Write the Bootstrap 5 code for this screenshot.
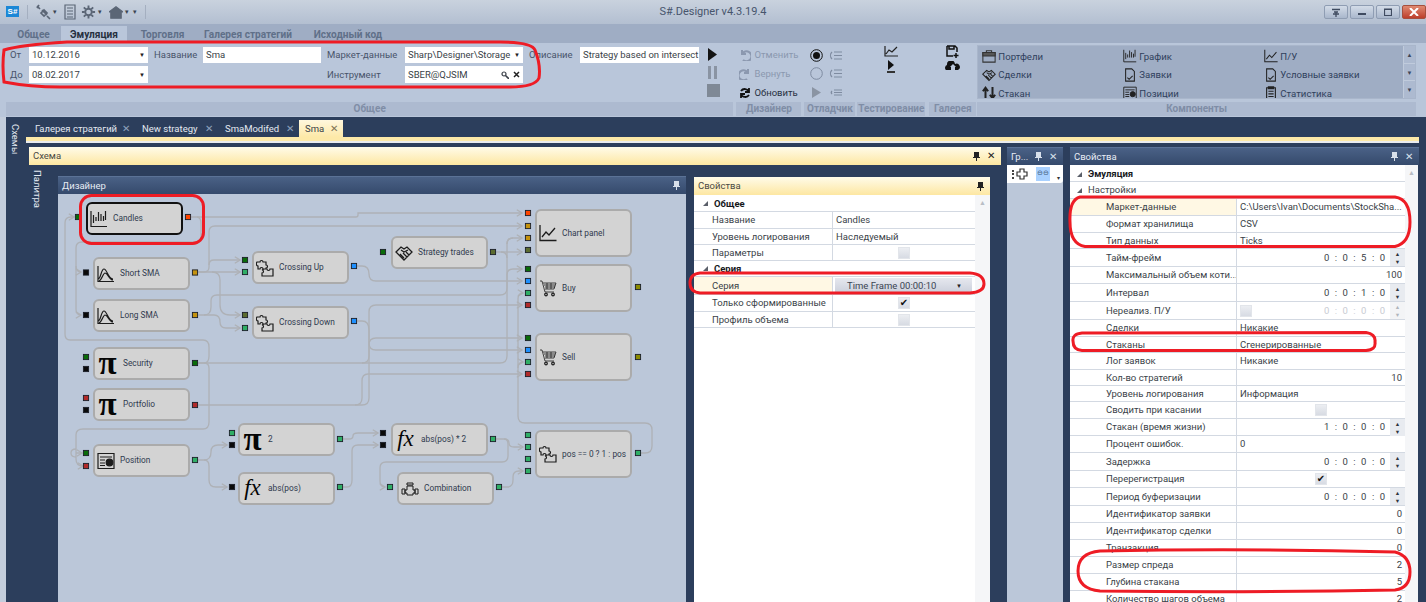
<!DOCTYPE html>
<html lang="ru">
<head>
<meta charset="utf-8">
<title>S#.Designer</title>
<link href="https://cdn.jsdelivr.net/npm/bootstrap@5.3.0/dist/css/bootstrap.min.css" rel="stylesheet">
<style>
html,body{margin:0;height:602px;overflow:hidden}
body{width:1426px;background:#2c3e5c;font-family:Roboto,"Noto Sans","Liberation Sans",sans-serif;font-size:9.5px;line-height:1;color:#3a3f48;position:relative}
.ico{display:block;fill:none;stroke:currentColor;stroke-width:1.2}
.tbar{height:24px;background:linear-gradient(#c9d2de,#b3bfd1)}
.logo-s{width:13px;height:11px;background:#1b87d6;color:#fff;font:700 8px/11px "Liberation Sans",sans-serif;text-align:center;margin:6px 4px 0 6px}
.tb-sep{width:1px;height:14px;background:#a4afc0;margin:5px 4px 0}
.tb-i{color:#5b6676;margin:4px 2px 0 3px}
.tb-car{color:#3b4451;font-size:7px;margin:9px 4px 0 0}
.ttl{font-size:11px;color:#47556c;left:0;right:0;top:6px;text-align:center;position:absolute}
.wbtns{position:absolute;right:0;top:5px;gap:2px}
.wb{width:24px;height:14px;border:1px solid #8f9db3;border-radius:2px;background:linear-gradient(#d3dce8,#a9b7cc);color:#3f4b60;display:flex;align-items:center;justify-content:center}
.wb-x{background:linear-gradient(#e08a72,#bd3f2c);border-color:#a5503f;color:#fff}
.rtabs{height:19px;background:#9fadc4;align-items:flex-end}
.rtab{height:17px;padding-top:4px;font-size:10.1px;font-weight:700;color:#5f7089;text-align:center;white-space:nowrap;flex:none}
.rt1{width:55px;margin-left:6px}
.rt2{width:66px;background:#b9c6da;color:#27303f}
.rt3{width:71px}.rt4{width:100px}.rt5{width:100px}
.rbn{height:74px;background:#b9c6da;padding:0 10px 1px 6px}
.grp{display:flex;flex-direction:column}
.grp-b{height:59px;padding-top:3px}
.grp-l{height:14px;background:#adbad0;color:#7f8da6;font-size:10px;font-weight:700;text-align:center;line-height:13px;white-space:nowrap}
.g-gen{width:728px}
.g-des{width:65px;margin-left:3px}
.g-des .grp-b{padding-top:2px}
.g-dbg{width:51px;margin-left:3px}
.g-tst{width:68px;margin-left:2px}
.g-gal{width:47px;margin-left:4px}
.g-cmp{width:439px;margin-left:1px}
.gen-grid{display:grid;grid-template-columns:23px 119px 55px 118px 84px 118px 57px 119px;grid-template-rows:16px 17px;row-gap:3px;align-items:center;margin-top:1px;height:36px}
.lbl{padding-left:6px;color:#48546a;white-space:nowrap}
.lbl-o{padding-left:4px}
.fld{height:100%;background:#fff;padding:0 3px;color:#3a3f48;white-space:nowrap;overflow:hidden;display:flex;align-items:center;justify-content:space-between}
.car{font-size:6px;color:#222}
.play-col{width:26px;padding-left:8px;gap:5px;padding-top:2px}
.ac-row{height:19px;gap:3px;padding-left:3px;color:#8b98af;white-space:nowrap}
.ac-on{color:#27303f}
.dbg-row{height:18.6px;padding-left:6px;gap:6px}
.tst-col{gap:3px;padding-top:2px}
.gal-box{height:54px;background:#9fadc4;border:1px solid #a9b6cb;margin-top:-1px;position:relative;overflow:hidden}
.gal-sc{width:12px;background:#adbad0;border-left:1px solid #c0cbdc;color:#3d4658;font-size:6px;text-align:center}
.gal-sc div{height:17.6px;line-height:17px;border-bottom:1px solid #c0cbdc}
.gal-col{padding:1px 0 0 4px;width:141px;flex:none}
.gal-it{height:18.6px;gap:2px;color:#2f3f5c;font-size:9.6px;white-space:nowrap}
.gal-it svg{color:#222}
.dock{height:485px}
.lstrip{width:6px;background:#c3cddc}
.vbar{width:19px;background:#2c3e5c;color:#e5ebf3;padding:7px 0 0 4px}
.vt{writing-mode:vertical-rl;font-size:9.5px}
.dmain{width:1401px}
.dtabs{height:20px;padding:3px 0 0 1px;position:relative}
.dtab{height:17px;padding:0 3px 0 9px;color:#e4e9f1;white-space:nowrap;justify-content:space-between}
.dtab span{color:#8ea0bb;font-size:10px;line-height:1}
.dt-a{width:107px}.dt-b{width:83px}.dt-c{width:81px}
.dtab-on{width:44px;background:linear-gradient(#fff7de,#fde9a8);color:#3a3f48;padding:0 5px 0 6px;margin-left:2px}
.dtab-on span{color:#7d7355}
.ystrip{height:7px;margin:0 7px 0 1px;border-top:4px solid #fde9a8;box-shadow:inset 0 2px 0 #e9ecf0}
.panels{padding:3px 0 0 4px;gap:6px;height:458px}
.ph{height:18px;padding:0 4px;display:flex;align-items:center;justify-content:space-between;flex:none;gap:2px;white-space:nowrap}
.ph-d{background:linear-gradient(#4a6186,#354a6c);color:#e8edf5;border-top:1px solid #5b7296}
.ph-y{background:linear-gradient(#fffbe9,#fde7a2);color:#4a4a44}
.ph-ic{color:#222;font-size:10px;display:flex;align-items:center;gap:7px;padding-right:2px}
.ph-d .ph-ic{color:#d8e0eb}
.pin{width:7px;height:9px;display:block;fill:currentColor}
.p-sch{width:972px}
.sch-b{height:440px;padding-top:11px}
.pal{width:29px;color:#e5ebf3;padding:5px 0 0 3px;margin-top:-11px}
.p-des{width:628px;position:relative}
.canvas{position:relative;height:408px;background:#bbc7d9;overflow:hidden}
.canvas>svg{position:absolute;left:0;top:0}
.nd{position:absolute;background:#d3d3d3;border:2px solid #ababab;border-radius:6px;display:flex;align-items:center;color:#2f3a4e;font-size:8.3px;width:97px;white-space:nowrap}
.nd svg{flex:none;margin:0 5px 0 2px;color:#1c1c1c}
.nd-on{border-color:#111}
.nd-g{font:700 33px/1 "Liberation Serif",serif;width:21px;margin:-7px 5px 0 2px;text-align:center;color:#050505;flex:none;height:26px}
.nd-f{font:italic 400 23px/1 "Liberation Serif",serif;width:21px;margin:-2px 5px 0 2px;text-align:center;color:#050505;flex:none}
.h33{height:33px}.h48{height:48px}
.a1{left:28px;top:8px}.a2{left:35px;top:63px}.a3{left:35px;top:105px}.a4{left:194px;top:57px}.a5{left:194px;top:112px}
.a6{left:35px;top:153px}.a7{left:35px;top:194px}.a8{left:35px;top:250px}.a9{left:180px;top:229px}.a10{left:180px;top:278px}
.a11{left:333px;top:42px}.a12{left:477px;top:15px}.a13{left:477px;top:70px}.a14{left:477px;top:139px}
.a15{left:333px;top:229px}.a16{left:339px;top:278px}.a17{left:477px;top:236px}
.wires{fill:none;stroke:#aeb1b6;stroke-width:1.3}
.p-k{fill:#0a0a0a}.p-dg{fill:#0a6b0a}.p-sg{fill:#2fae66}.p-bl{fill:#1e90ff}.p-go{fill:#c4920e}.p-or{fill:#ff4500}.p-br{fill:#b02a2a}.p-ol{fill:#5b6b2f}.p-yo{fill:#8a8a00}
.ports rect{stroke:#1a1f28;stroke-width:.9;width:5.2px;height:5.2px}
.p-prop{width:296px;margin-left:8px;margin-top:1px}
.prop-b{height:407px;background:#fff;display:flex}
.pg{--nw:139px;--pl:18px;width:281px;flex:none;padding-top:1px}
.pg-r{--nw:167px;--pl:36px;width:335px;padding-top:2px}
.pgr{display:flex;align-items:center;border-bottom:1px solid #d3d9e2;box-sizing:border-box;color:#3a3f48}
.pg-n{width:var(--nw);padding-left:var(--pl);flex:none;border-right:1px solid #d3d9e2;height:100%;display:flex;align-items:center;white-space:nowrap;overflow:hidden}
.pg-v{flex:1;padding:0 3px;height:100%;display:flex;align-items:center;white-space:nowrap;min-width:0}
.pg-e{justify-content:flex-end}
.pg-c{justify-content:center}
.pgs{font-weight:700;color:#16181c;padding-left:9px;gap:6px;display:flex;align-items:center;height:100%;white-space:nowrap;width:var(--nw);flex:none}
.pg-r .pgs{padding-left:7px}
.pgs-n{font-weight:400;color:#3a3f48}
.tri{width:0;height:0;border-style:solid;border-width:0 0 5px 5px;border-color:transparent transparent #5a5f69 transparent}
.cb{width:12px;height:12px;background:linear-gradient(#eceef2,#d7dbe3);border:1px solid #e2e5ea;color:#111;font:700 10px/10px "DejaVu Sans",sans-serif;text-align:center;display:block}
.hi{background:#fff8e4}
.cbo{height:15px;width:138px;margin-left:-1px;background:linear-gradient(#e6e8ef,#cbcfdb);display:flex;align-items:center;justify-content:space-between;padding:0 10px 0 12px;color:#3b4452}
.sc{flex:1;background:#f5f6f8;text-align:center;color:#b9bdc5;font-size:7px;padding-top:5px}
.r15{height:15px}.r16{height:16px}.r17{height:17px}.r18{height:18px}
.spin{width:15px;height:17px;flex:none;background:#e8ebf0;color:#30353d;font-size:5.5px;line-height:8px;text-align:center;margin-left:5px;margin-right:-3px;padding-top:1px}
.tm{word-spacing:3.1px}
.dis{color:#c9ccd3}
.spin.dis{color:#b0b4bc;background:#f3f4f6}
.p-gr{width:56px}
.gr-b{height:440px;background:#bbc7d9}
.gr-t{height:18px;background:#fff;border-radius:0 0 3px 0;width:56px;padding-left:5px;gap:2px}
.gr-on{width:14px;height:14px;background:#a9d1ff;color:#46617e;font-size:7px;text-align:center;line-height:13px;margin-left:6px;white-space:nowrap}
.gr-m{font-size:6px;color:#333;margin:7px 0 0 5px}
.gr-d{width:2px;height:9px;border-left:2px dotted #444}
.p-r{width:349px;margin-left:1px}
.r-b{height:440px;background:#fff;display:flex;width:348px}
.anno{position:absolute;left:0;top:0;z-index:5;pointer-events:none;fill:none;stroke:#ee1c25;stroke-width:3}
</style>
</head>
<body>
<svg width="0" height="0" class="position-absolute">
<defs>
<symbol id="s-candle" viewBox="0 0 18 18"><path d="M1 1V16.500H17M3.500 5v8M6 7v4M8.500 2v9M11 4v7M13.500 6v5M15.500 1v9"/></symbol>
<symbol id="s-line" viewBox="0 0 18 18"><path d="M1 1V16.500H17.500M3 13l4-5 3 3 6-7" stroke-width="1.300"/></symbol>
<symbol id="s-sma" viewBox="0 0 18 18"><path d="M1 1V16.500H17M1 14C4 14 4 4 7 4c3 0 4 10 9 10M2 16C5 15 6 8 8 8c3 0 4 7 8 7"/></symbol>
<symbol id="s-puz" viewBox="0 0 18 18"><path d="M1 3h3c0-2 3-2 3 0h3v3c2 0 2 3 0 3v1H7c0-2-3-2-3 0H2V7C0 7 0 4 1 3zM8 10h3c0 2 3 2 3 0h3v7H6v-3c2 0 2-3 0-3z"/></symbol>
<symbol id="s-shake" viewBox="0 0 18 18"><path d="M1 8l5-5 3 2 3-2 5 5-8 8zM6 6l3 2 4-2M5 10l4 4M8 9l4 4M11 8l3 3" stroke-width="1.300"/></symbol>
<symbol id="s-cart" viewBox="0 0 18 18"><path d="M1 2h2l3 11h9M4 4h13l-2 6H6M5 6h11M6 8h10M8 4v6M12 4v6" stroke-width=".8"/><circle cx="7" cy="15.500" r="1.300"/><circle cx="14" cy="15.500" r="1.300"/></symbol>
<symbol id="s-pos" viewBox="0 0 18 18"><path d="M1 1.500h16v15H1zM3 5h12M3 8h5M3 11h5M3 13.500h5"/><circle cx="12.500" cy="10.500" r="3.300" fill="currentColor"/></symbol>
<symbol id="s-valve" viewBox="0 0 18 18"><path d="M1 9h3v5H1zM14 9h3v5h-3zM4 10h2V6h6v4h2v3h-2v2H6v-2H4zM6 3h6v2H6z" stroke-width="1"/></symbol>
<symbol id="s-case" viewBox="0 0 16 16"><path d="M1 4h14v11H1zM5 4V2h6v2" stroke="#333"/><path d="M1 4h14v4H1z" fill="#555" stroke="#333"/></symbol>
<symbol id="s-doc" viewBox="0 0 16 16"><path d="M3 1h7l3 3v11H3zM5 11l2 2 4-4"/></symbol>
<symbol id="s-arr" viewBox="0 0 16 16"><path d="M4 15V3M1 6l3-4 3 4M12 1v12M9 10l3 4 3-4" stroke-width="2.300"/></symbol>
<symbol id="s-clip" viewBox="0 0 16 16"><path d="M3 2h10v13H3zM5 1h6v2H5zM5 6h6M5 9h6M5 12h6" stroke-width="1.300"/></symbol>
</defs>
</svg>

<div class="tbar d-flex position-relative">
  <div class="logo-s">S#</div>
  <div class="tb-sep"></div>
  <svg class="ico tb-i" width="16" height="16" viewBox="0 0 16 16"><path d="M2 2l3 3M4 1L2 4M7 6l5 5M6 9l3-3 3 3-3 3zM12 12l3 3" stroke-width="1.700"/></svg><span class="tb-car">▾</span>
  <svg class="ico tb-i" width="12" height="16" viewBox="0 0 12 16"><path d="M1 1h10v14H1zM3 4h6M3 7h6M3 10h6M3 13h6"/></svg>
  <svg class="ico tb-i" width="15" height="16" viewBox="0 0 16 16"><circle cx="8" cy="8" r="3.500" stroke-width="2"/><path d="M8 1v3M8 12v3M1 8h3M12 8h3M3 3l2 2M11 11l2 2M13 3l-2 2M5 11l-2 2" stroke-width="2"/></svg><span class="tb-car">▾</span>
  <svg class="ico tb-i" width="14" height="16" viewBox="0 0 16 16"><path d="M0 8l8-6 8 6h-2v7H2V8z" fill="currentColor"/></svg><span class="tb-car">▾</span>
  <span class="tb-car">▾</span>
  <div class="tb-sep"></div>
  <div class="ttl">S#.Designer v4.3.19.4</div>
  <div class="wbtns d-flex">
    <div class="wb"><svg class="ico" width="10" height="9" viewBox="0 0 10 9"><path d="M1 1.500h8M3 4h4M5 4v5M2 6h6" stroke-width="1.300"/></svg></div>
    <div class="wb"><svg class="ico" width="8" height="6" viewBox="0 0 8 6"><path d="M0 5h8" stroke-width="2"/></svg></div>
    <div class="wb"><svg class="ico" width="8" height="8" viewBox="0 0 8 8"><path d="M.5 1h7v6.500H.500z M.5 1.500h7" stroke-width="1.200"/></svg></div>
    <div class="wb wb-x"><svg class="ico" width="10" height="8" viewBox="0 0 10 8"><path d="M1 0l8 8M9 0L1 8" stroke-width="2"/></svg></div>
  </div>
</div>

<div class="rtabs d-flex">
  <div class="rtab rt1">Общее</div>
  <div class="rtab rt2">Эмуляция</div>
  <div class="rtab rt3">Торговля</div>
  <div class="rtab rt4">Галерея стратегий</div>
  <div class="rtab rt5">Исходный код</div>
</div>

<div class="rbn d-flex">
  <div class="grp g-gen">
    <div class="grp-b d-flex">
      <div class="gen-grid">
        <div class="lbl lbl-o">От</div><div class="fld">10.12.2016<span class="car">▼</span></div>
        <div class="lbl">Название</div><div class="fld">Sma</div>
        <div class="lbl">Маркет-данные</div><div class="fld">Sharp\Designer\Storage<span class="car">▼</span></div>
        <div class="lbl">Описание</div><div class="fld">Strategy based on intersect</div>
        <div class="lbl lbl-o">До</div><div class="fld">08.02.2017<span class="car">▼</span></div>
        <div></div><div></div>
        <div class="lbl">Инструмент</div><div class="fld">SBER@QJSIM<span class="d-flex gap-1 align-items-center"><svg class="ico" width="8" height="8" viewBox="0 0 8 8"><circle cx="3" cy="3" r="2"/><path d="M4.500 4.500L8 8" stroke-width="1.600"/></svg><svg class="ico" width="7" height="7" viewBox="0 0 7 7"><path d="M1 1l5 5M6 1L1 6" stroke-width="1.500" stroke="#222"/></svg></span></div>
      </div>
      <div class="play-col d-flex flex-column">
        <svg width="11" height="13" viewBox="0 0 11 13"><path d="M1 0l9 6.500L1 13z" fill="#141414"/></svg>
        <svg width="11" height="13" viewBox="0 0 11 13"><path d="M1 0h3v13H1zM7 0h3v13H7z" fill="#8a94a3"/></svg>
        <svg width="13" height="13" viewBox="0 0 13 13"><path d="M0 0h13v13H0z" fill="#7f8996"/></svg>
      </div>
    </div>
    <div class="grp-l">Общее</div>
  </div>
  <div class="grp g-des">
    <div class="grp-b">
      <div class="ac-row d-flex align-items-center"><svg class="ico" width="12" height="12" viewBox="0 0 12 12"><path d="M3 1v4h4M3 5a5 5 0 1 1 1 6" stroke-width="2"/></svg>Отменить</div>
      <div class="ac-row d-flex align-items-center"><svg class="ico" width="12" height="12" viewBox="0 0 12 12"><path d="M9 1v4H5M9 5a5 5 0 1 0-1 6" stroke-width="2"/></svg>Вернуть</div>
      <div class="ac-row ac-on d-flex align-items-center"><svg class="ico" width="12" height="12" viewBox="0 0 12 12"><path d="M10 5A4.500 4.500 0 0 0 2 4M2 7a4.500 4.500 0 0 0 8 1M10 1v4H6M2 11V7h4" stroke="#111" stroke-width="1.800"/></svg>Обновить</div>
    </div>
    <div class="grp-l">Дизайнер</div>
  </div>
  <div class="grp g-dbg">
    <div class="grp-b">
      <div class="dbg-row d-flex align-items-center"><svg width="13" height="13" viewBox="0 0 13 13"><circle cx="6.500" cy="6.500" r="5.800" fill="none" stroke="#111"/><circle cx="6.500" cy="6.500" r="3.500" fill="#111"/></svg><svg class="ico" width="13" height="9" viewBox="0 0 13 9" color="#7e8ba0"><path d="M3 1C1 3 1 6 3 8M5 1h8M5 4.500h8M5 8h8"/></svg></div>
      <div class="dbg-row d-flex align-items-center"><svg width="13" height="13" viewBox="0 0 13 13"><circle cx="6.500" cy="6.500" r="5.800" fill="none" stroke="#7e8ba0"/></svg><svg class="ico" width="13" height="9" viewBox="0 0 13 9" color="#7e8ba0"><path d="M3 1C1 3 1 6 3 8M5 1h8M5 4.500h8M5 8h8"/></svg></div>
      <div class="dbg-row d-flex align-items-center"><svg width="13" height="13" viewBox="0 0 13 13"><path d="M2 1l9 5.500L2 12z" fill="#8a94a3"/></svg><svg class="ico" width="13" height="9" viewBox="0 0 13 9" color="#7e8ba0"><path d="M3 3C2 4 2 5 3 6M5 2h8M5 4.500h8M5 7h8"/></svg></div>
    </div>
    <div class="grp-l">Отладчик</div>
  </div>
  <div class="grp g-tst">
    <div class="grp-b tst-col d-flex flex-column align-items-center">
      <svg class="ico" width="14" height="12" viewBox="0 0 14 12" color="#222"><path d="M1 1v10h13M2 9l3-4 3 2 5-5"/></svg>
      <svg width="10" height="14" viewBox="0 0 10 14"><path d="M2 0l6 5-6 5z" fill="#111"/><path d="M1 12h8" stroke="#333" stroke-width="2"/></svg>
    </div>
    <div class="grp-l">Тестирование</div>
  </div>
  <div class="grp g-gal">
    <div class="grp-b tst-col d-flex flex-column align-items-center">
      <svg class="ico" width="13" height="13" viewBox="0 0 13 13" color="#111"><path d="M1 1h8l2 2v4M1 1v10h6M3 1v3h5V1" stroke-width="1.500"/><path d="M10 8v5M7.500 10.500h5" stroke-width="1.500"/></svg>
      <svg width="15" height="10" viewBox="0 0 15 10"><path d="M1 9a3 3 0 0 1 1-5 4 4 0 0 1 8-1 3 3 0 0 1 3 6h-3V6h1L8 3 5 6h1v3z" fill="#111"/></svg>
    </div>
    <div class="grp-l">Галерея</div>
  </div>
  <div class="grp g-cmp">
    <div class="grp-b">
      <div class="gal-box d-flex">
        <div class="gal-col">
          <div class="gal-it d-flex align-items-center"><svg class="ico" width="14" height="14"><use href="#s-case"/></svg>Портфели</div>
          <div class="gal-it d-flex align-items-center"><svg class="ico" width="14" height="14"><use href="#s-shake"/></svg>Сделки</div>
          <div class="gal-it d-flex align-items-center"><svg class="ico" width="14" height="14"><use href="#s-arr"/></svg>Стакан</div>
        </div>
        <div class="gal-col">
          <div class="gal-it d-flex align-items-center"><svg class="ico" width="14" height="14"><use href="#s-candle"/></svg>График</div>
          <div class="gal-it d-flex align-items-center"><svg class="ico" width="14" height="14"><use href="#s-doc"/></svg>Заявки</div>
          <div class="gal-it d-flex align-items-center"><svg class="ico" width="14" height="14"><use href="#s-pos"/></svg>Позиции</div>
        </div>
        <div class="gal-col">
          <div class="gal-it d-flex align-items-center"><svg class="ico" width="14" height="14"><use href="#s-line"/></svg>П/У</div>
          <div class="gal-it d-flex align-items-center"><svg class="ico" width="14" height="14"><use href="#s-doc"/></svg>Условные заявки</div>
          <div class="gal-it d-flex align-items-center"><svg class="ico" width="14" height="14"><use href="#s-clip"/></svg>Статистика</div>
        </div>
        <div class="gal-sc ms-auto"><div>▲</div><div>▼</div><div>▼</div></div>
      </div>
    </div>
    <div class="grp-l">Компоненты</div>
  </div>
</div>

<div class="dock d-flex">
  <div class="lstrip"></div>
  <div class="vbar"><div class="vt">Схемы</div></div>
  <div class="dmain">
    <div class="dtabs d-flex">
      <div class="dtab dt-a d-flex align-items-center">Галерея стратегий<span>✕</span></div>
      <div class="dtab dt-b d-flex align-items-center">New strategy<span>✕</span></div>
      <div class="dtab dt-c d-flex align-items-center">SmaModifed<span>✕</span></div>
      <div class="dtab dtab-on d-flex align-items-center">Sma<span>✕</span></div>
    </div>
    <div class="ystrip"></div>
    <div class="panels d-flex">
      <div class="p-sch">
        <div class="ph ph-y">Схема<div class="ph-ic"><svg class="pin" viewBox="0 0 7 9"><path d="M1 0h5v5h1v1H4v3H3V6H0V5h1z"/></svg>✕</div></div>
        <div class="sch-b d-flex">
          <div class="pal"><div class="vt">Палитра</div></div>
          <div class="p-des">
            <div class="ph ph-d">Дизайнер<div class="ph-ic"><svg class="pin" viewBox="0 0 7 9"><path d="M1 0h5v5h1v1H4v3H3V6H0V5h1z"/></svg></div></div>
            <div class="canvas">
              <svg width="628" height="408" viewBox="58 194 628 408">
                <defs><marker id="ar" markerWidth="6" markerHeight="6" refX="5" refY="3" orient="auto"><path d="M1 .5L5 3 1 5.500" fill="none" stroke="#aeb1b6"/></marker></defs>
                <g class="wires">
                  <path d="M191 217H356Q358 217 358 215V213H522" marker-end="url(#ar)"/>
                  <path d="M197 217Q201 217 201 224V236Q201 242 195 242H82Q76 242 76 248V266Q76 272 81 272" marker-end="url(#ar)"/>
                  <path d="M76 266V309Q76 315 81 315" marker-end="url(#ar)"/>
                  <path d="M198 272H204Q209 272 209 267V232Q209 226 215 226H522" marker-end="url(#ar)"/>
                  <path d="M209 265Q209 260 214 260H240" marker-end="url(#ar)"/>
                  <path d="M198 272H240" marker-end="url(#ar)"/>
                  <path d="M212 272Q220 272 220 280V305Q220 315 230 315H240" marker-end="url(#ar)"/>
                  <path d="M198 315H204Q211 315 211 307V301Q211 295 217 295H500Q507 295 507 288V244Q507 238 513 238H522" marker-end="url(#ar)"/>
                  <path d="M204 315H214Q220 315 220 322Q220 328 226 328H240" marker-end="url(#ar)"/>
                  <path d="M357 266H362Q369 266 369 274Q369 281 376 281H522" marker-end="url(#ar)"/>
                  <path d="M357 321H362Q369 321 369 330V343Q369 350 376 350H522" marker-end="url(#ar)"/>
                  <path d="M496 252H522" marker-end="url(#ar)"/>
                  <path d="M501 252Q507 252 507 258M507 244Q507 238 513 238"/>
                  <path d="M198 363H500Q507 363 507 356V275Q507 269 513 269H522" marker-end="url(#ar)"/>
                  <path d="M362 363Q369 363 369 356V345Q369 338 376 338H522" marker-end="url(#ar)"/>
                  <path d="M198 405H362Q369 405 369 398V312Q369 305 376 305H522" marker-end="url(#ar)"/>
                  <path d="M355 405Q362 405 362 398V381Q362 374 368 374H522" marker-end="url(#ar)"/>
                  <path d="M198 363H204Q209 363 209 356V347Q209 340 203 340H70Q65 340 65 334V223Q65 217 71 217H74" marker-end="url(#ar)"/>
                  <path d="M204 363Q209 363 209 368V422Q209 429 203 429H83Q76 429 76 435V459Q76 466 83 466" marker-end="url(#ar)"/>
                  <path d="M76 449Q71 449 71 453T76 457M76 453H82" marker-end="url(#ar)"/>
                  <path d="M198 460H204Q211 460 211 452Q211 445 218 445H227" marker-end="url(#ar)"/>
                  <path d="M204 460Q209 460 209 466V480Q209 487 216 487H227" marker-end="url(#ar)"/>
                  <path d="M343 439H349Q353 439 353 436Q353 433 358 433H378" marker-end="url(#ar)"/>
                  <path d="M343 487H347Q352 487 352 480V451Q352 445 358 445H378" marker-end="url(#ar)"/>
                  <path d="M496 439H504Q509 439 509 443Q509 447 514 447H523" marker-end="url(#ar)"/>
                  <path d="M504 439Q508 439 508 444V456Q508 462 502 462H386Q380 462 380 468V481Q380 487 385 487" marker-end="url(#ar)"/>
                  <path d="M502 487H507Q513 487 513 480V477Q513 471 519 471H523" marker-end="url(#ar)"/>
                  <path d="M641 453H645Q652 453 652 446V430Q652 423 645 423H525Q518 423 518 416V299Q518 293 523 293" marker-end="url(#ar)"/>
                  <path d="M518 368Q518 362 523 362" marker-end="url(#ar)"/>
                </g>
                <g class="ports">
                  <rect x="75.400" y="214.400" class="p-dg"/><rect x="185.400" y="214.400" class="p-or"/>
                  <rect x="83.400" y="269.900" class="p-k"/><rect x="192.400" y="269.900" class="p-go"/>
                  <rect x="83.400" y="312.400" class="p-k"/><rect x="192.400" y="312.400" class="p-go"/>
                  <rect x="242.400" y="257.400" class="p-dg"/><rect x="242.400" y="269.400" class="p-sg"/><rect x="351.400" y="263.400" class="p-bl"/>
                  <rect x="242.400" y="312.400" class="p-ol"/><rect x="242.400" y="325.400" class="p-sg"/><rect x="351.400" y="318.400" class="p-bl"/>
                  <rect x="83.400" y="354.400" class="p-dg"/><rect x="83.400" y="366.400" class="p-k"/><rect x="192.400" y="360.400" class="p-dg"/>
                  <rect x="83.400" y="395.400" class="p-br"/><rect x="83.400" y="407.400" class="p-k"/><rect x="192.400" y="402.400" class="p-br"/>
                  <rect x="83.400" y="450.400" class="p-dg"/><rect x="83.400" y="463.400" class="p-br"/><rect x="192.400" y="457.400" class="p-sg"/>
                  <rect x="229.400" y="430.400" class="p-sg"/><rect x="229.400" y="442.400" class="p-k"/><rect x="337.400" y="436.400" class="p-sg"/>
                  <rect x="229.400" y="484.400" class="p-k"/><rect x="337.400" y="484.400" class="p-sg"/>
                  <rect x="380.400" y="430.400" class="p-k"/><rect x="380.400" y="442.400" class="p-k"/><rect x="490.400" y="436.400" class="p-sg"/>
                  <rect x="387.400" y="484.400" class="p-sg"/><rect x="496.400" y="484.400" class="p-sg"/>
                  <rect x="525.400" y="432.400" class="p-sg"/><rect x="525.400" y="444.400" class="p-sg"/><rect x="525.400" y="456.400" class="p-sg"/><rect x="525.400" y="468.400" class="p-sg"/><rect x="635.400" y="450.400" class="p-sg"/>
                  <rect x="525.400" y="210.400" class="p-or"/><rect x="525.400" y="223.400" class="p-go"/><rect x="525.400" y="235.400" class="p-go"/><rect x="525.400" y="247.400" class="p-ol"/>
                  <rect x="380.400" y="249.400" class="p-dg"/><rect x="490.400" y="249.400" class="p-ol"/>
                  <rect x="525.400" y="266.400" class="p-dg"/><rect x="525.400" y="278.400" class="p-bl"/><rect x="525.400" y="290.400" class="p-sg"/><rect x="525.400" y="302.400" class="p-br"/><rect x="635.400" y="284.400" class="p-yo"/>
                  <rect x="525.400" y="335.400" class="p-dg"/><rect x="525.400" y="347.400" class="p-bl"/><rect x="525.400" y="359.400" class="p-sg"/><rect x="525.400" y="371.400" class="p-br"/><rect x="635.400" y="354.400" class="p-yo"/>
                </g>
              </svg>
              <div class="nd nd-on h33 a1"><svg class="ico" width="18" height="18"><use href="#s-candle"/></svg>Candles</div>
              <div class="nd h33 a2"><svg class="ico" width="18" height="18"><use href="#s-sma"/></svg>Short SMA</div>
              <div class="nd h33 a3"><svg class="ico" width="18" height="18"><use href="#s-sma"/></svg>Long SMA</div>
              <div class="nd h33 a4"><svg class="ico" width="18" height="18"><use href="#s-puz"/></svg>Crossing Up</div>
              <div class="nd h33 a5"><svg class="ico" width="18" height="18"><use href="#s-puz"/></svg>Crossing Down</div>
              <div class="nd h33 a6"><span class="nd-g">π</span>Security</div>
              <div class="nd h33 a7"><span class="nd-g">π</span>Portfolio</div>
              <div class="nd h33 a8"><svg class="ico" width="18" height="18"><use href="#s-pos"/></svg>Position</div>
              <div class="nd h33 a9"><span class="nd-g">π</span>2</div>
              <div class="nd h33 a10"><span class="nd-f">fx</span>abs(pos)</div>
              <div class="nd h33 a11"><svg class="ico" width="18" height="18"><use href="#s-shake"/></svg>Strategy trades</div>
              <div class="nd h48 a12"><svg class="ico" width="18" height="18"><use href="#s-line"/></svg>Chart panel</div>
              <div class="nd h48 a13"><svg class="ico" width="18" height="18"><use href="#s-cart"/></svg>Buy</div>
              <div class="nd h48 a14"><svg class="ico" width="18" height="18"><use href="#s-cart"/></svg>Sell</div>
              <div class="nd h33 a15"><span class="nd-f">fx</span>abs(pos) * 2</div>
              <div class="nd h33 a16"><svg class="ico" width="18" height="18"><use href="#s-valve"/></svg>Combination</div>
              <div class="nd h48 a17"><svg class="ico" width="18" height="18"><use href="#s-puz"/></svg>pos == 0 ? 1 : pos</div>
            </div>
          </div>
          <div class="p-prop">
            <div class="ph ph-y">Свойства<div class="ph-ic"><svg class="pin" viewBox="0 0 7 9"><path d="M1 0h5v5h1v1H4v3H3V6H0V5h1z"/></svg></div></div>
            <div class="prop-b">
              <div class="pg">
                <div class="pgr r16"><div class="pgs"><i class="tri"></i>Общее</div></div>
                <div class="pgr r17"><div class="pg-n">Название</div><div class="pg-v">Candles</div></div>
                <div class="pgr r16"><div class="pg-n">Уровень логирования</div><div class="pg-v">Наследуемый</div></div>
                <div class="pgr r16"><div class="pg-n">Параметры</div><div class="pg-v pg-c"><i class="cb"></i></div></div>
                <div class="pgr r16"><div class="pgs"><i class="tri"></i>Серия</div></div>
                <div class="pgr r18"><div class="pg-n hi">Серия</div><div class="pg-v"><div class="cbo">Time Frame 00:00:10<span class="car">▼</span></div></div></div>
                <div class="pgr r17"><div class="pg-n">Только сформированные</div><div class="pg-v pg-c"><i class="cb">✔</i></div></div>
                <div class="pgr r16"><div class="pg-n">Профиль объема</div><div class="pg-v pg-c"><i class="cb"></i></div></div>
              </div>
              <div class="sc">▲</div>
            </div>
          </div>
        </div>
      </div>
      <div class="p-gr">
        <div class="ph ph-d">Гр...<div class="ph-ic"><svg class="pin" viewBox="0 0 7 9"><path d="M1 0h5v5h1v1H4v3H3V6H0V5h1z"/></svg>✕</div></div>
        <div class="gr-b">
          <div class="gr-t d-flex align-items-center"><i class="gr-d"></i><svg class="ico" width="12" height="12" viewBox="0 0 12 12" color="#333"><path d="M4 1h4v3h3v4H8v3H4V8H1V4h3z"/></svg><div class="gr-on">⊖⊖</div><span class="gr-m">▾</span></div>
        </div>
      </div>
      <div class="p-r">
        <div class="ph ph-d">Свойства<div class="ph-ic"><svg class="pin" viewBox="0 0 7 9"><path d="M1 0h5v5h1v1H4v3H3V6H0V5h1z"/></svg>✕</div></div>
        <div class="r-b">
          <div class="pg pg-r">
            <div class="pgr r15"><div class="pgs"><i class="tri"></i>Эмуляция</div></div>
            <div class="pgr r17"><div class="pgs pgs-n"><i class="tri"></i>Настройки</div></div>
            <div class="pgr r17"><div class="pg-n hi">Маркет-данные</div><div class="pg-v">C:\Users\Ivan\Documents\StockSha...</div></div>
            <div class="pgr r17"><div class="pg-n">Формат хранилища</div><div class="pg-v">CSV</div></div>
            <div class="pgr r16"><div class="pg-n">Тип данных</div><div class="pg-v">Ticks</div></div>
            <div class="pgr r18"><div class="pg-n">Тайм-фрейм</div><div class="pg-v pg-e"><span class="tm">0 : 0 : 5 : 0</span><div class="spin">▲<br>▼</div></div></div>
            <div class="pgr r17"><div class="pg-n">Максимальный объем коти...</div><div class="pg-v pg-e">100</div></div>
            <div class="pgr r18"><div class="pg-n">Интервал</div><div class="pg-v pg-e"><span class="tm">0 : 0 : 1 : 0</span><div class="spin">▲<br>▼</div></div></div>
            <div class="pgr r18"><div class="pg-n">Нереализ. П/У</div><div class="pg-v pg-e"><i class="cb me-auto"></i><span class="tm dis">0 : 0 : 0 : 0</span><div class="spin dis">▲<br>▼</div></div></div>
            <div class="pgr r17"><div class="pg-n">Сделки</div><div class="pg-v">Никакие</div></div>
            <div class="pgr r16"><div class="pg-n">Стаканы</div><div class="pg-v">Сгенерированные</div></div>
            <div class="pgr r17"><div class="pg-n">Лог заявок</div><div class="pg-v">Никакие</div></div>
            <div class="pgr r16"><div class="pg-n">Кол-во стратегий</div><div class="pg-v pg-e">10</div></div>
            <div class="pgr r16"><div class="pg-n">Уровень логирования</div><div class="pg-v">Информация</div></div>
            <div class="pgr r17"><div class="pg-n">Сводить при касании</div><div class="pg-v pg-c"><i class="cb"></i></div></div>
            <div class="pgr r17"><div class="pg-n">Стакан (время жизни)</div><div class="pg-v pg-e"><span class="tm">1 : 0 : 0 : 0</span><div class="spin">▲<br>▼</div></div></div>
            <div class="pgr r17"><div class="pg-n">Процент ошибок.</div><div class="pg-v">0</div></div>
            <div class="pgr r18"><div class="pg-n">Задержка</div><div class="pg-v pg-e"><span class="tm">0 : 0 : 0 : 0</span><div class="spin">▲<br>▼</div></div></div>
            <div class="pgr r17"><div class="pg-n">Перерегистрация</div><div class="pg-v pg-c"><i class="cb">✔</i></div></div>
            <div class="pgr r18"><div class="pg-n">Период буферизации</div><div class="pg-v pg-e"><span class="tm">0 : 0 : 0 : 0</span><div class="spin">▲<br>▼</div></div></div>
            <div class="pgr r17"><div class="pg-n">Идентификатор заявки</div><div class="pg-v pg-e">0</div></div>
            <div class="pgr r17"><div class="pg-n">Идентификатор сделки</div><div class="pg-v pg-e">0</div></div>
            <div class="pgr r17"><div class="pg-n">Транзакция</div><div class="pg-v pg-e">0</div></div>
            <div class="pgr r17"><div class="pg-n">Размер спреда</div><div class="pg-v pg-e">2</div></div>
            <div class="pgr r17"><div class="pg-n">Глубина стакана</div><div class="pg-v pg-e">5</div></div>
            <div class="pgr r17"><div class="pg-n">Количество шагов объема</div><div class="pg-v pg-e">2</div></div>
          </div>
          <div class="sc">▲</div>
        </div>
      </div>
    </div>
  </div>
</div>

<svg class="anno" width="1426" height="602" viewBox="0 0 1426 602">
  <path d="M67 42H500Q532 42 535 50Q541 65 539 78Q535 87 510 87H60Q30 87 4 82Q2 65 4 50Q20 45 67 42Z"/>
  <rect x="80.500" y="195.500" width="123" height="48" rx="11"/>
  <path d="M690 283Q690 274 700 273H970Q984 274 984 284Q984 292 970 293H700Q690 292 690 283Z"/>
  <path d="M1070 222Q1069 200 1080 197H1395Q1410 199 1410 222Q1410 243 1395 246.500H1085Q1070 244 1070 222Z"/>
  <path d="M1073 341Q1072 334 1082 333L1366 332.500Q1376 334 1375 342Q1376 350 1366 350.500H1082Q1073 350 1073 341Z"/>
  <path d="M1078 571Q1078 553 1100 551Q1240 548 1395 552Q1410 556 1410 572Q1410 588 1395 590Q1240 593 1100 591Q1078 589 1078 571Z"/>
</svg>
<script src="https://cdn.jsdelivr.net/npm/bootstrap@5.3.0/dist/js/bootstrap.bundle.min.js"></script>
</body>
</html>
